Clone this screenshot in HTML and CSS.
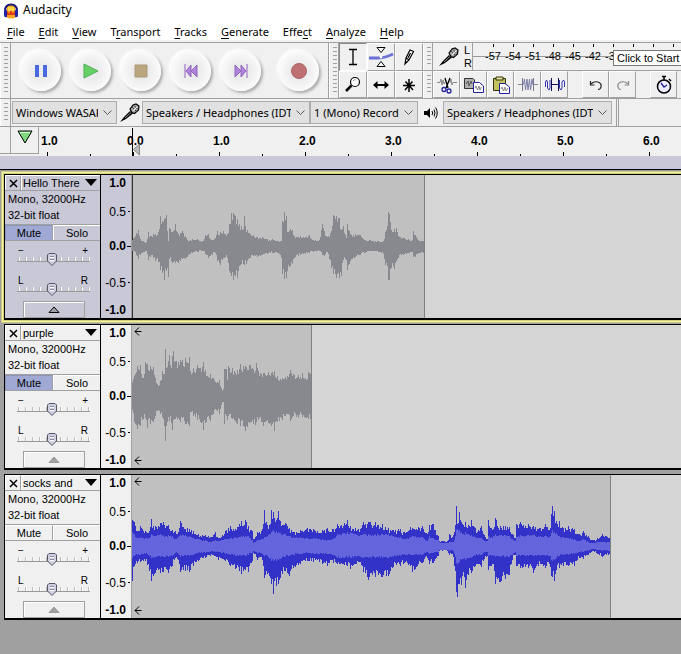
FILE: index.html
```html
<!DOCTYPE html>
<html lang="en">
<head>
<meta charset="UTF-8">
<meta name="viewport" content="width=device-width, initial-scale=1.0">
<title>Audacity</title>
<link rel="stylesheet" href="styles.css">
</head>
<body>
    <!-- Shared icons -->
    <svg class="sprite" width="0" height="0">
        <symbol id="mic" viewBox="0 0 20 20">
            <path d="M0 19 L4 14 L10 8 L13 10.500 L6 16 Z" fill="#000"/>
            <path d="M5 15 L11 9.500" stroke="#999"/>
            <path d="M10 6 L13 2 L16 1 L19 3 L18.500 7 L14.500 10.500 L12 9.500 Z" fill="#aaa" stroke="#000" stroke-width="1.200"/>
            <path d="M12 4 L16.500 8.500 M14 2.500 L18 6.500" stroke="#444"/>
            <path d="M13 8 L17.500 3.500" stroke="#eee"/>
        </symbol>
        <symbol id="arrow-left" viewBox="0 0 8 9">
            <path d="M1 4.500 H7.500 M5 .5 L1 4.500 L5 8.500" fill="none" stroke="#000"/>
        </symbol>
        <symbol id="close" viewBox="0 0 9 9">
            <path d="M1 1 L8 8 M8 1 L1 8" stroke="#000" stroke-width="1.500"/>
        </symbol>
    </svg>

    <header class="title-bar">
        <svg class="logo" width="16" height="16" viewBox="0 0 16 16">
            <path d="M4 3 Q8 0 12 3 L13 14 Q8 17 3 14 Z" fill="#f9a41c"/>
            <path d="M5 4 H11 V8 H5 Z" fill="#ffd84a"/>
            <path d="M3 10 L5 8 L6 11 L8 7 L10 11 L11 8 L13 10 V12 H3 Z" fill="#e0341b"/>
            <path d="M2 8 Q2 1.500 8 1.500 Q14 1.500 14 8" fill="none" stroke="#17177c" stroke-width="2"/>
            <path d="M1 7 Q4 6 4 8 V14 Q1 15 1 12 Z M15 7 Q12 6 12 8 V14 Q15 15 15 12 Z" fill="#2323a8"/>
        </svg>
        <h1>Audacity</h1>
    </header>

    <nav class="menu-bar">
        <a href="#"><u>F</u>ile</a>
        <a href="#"><u>E</u>dit</a>
        <a href="#"><u>V</u>iew</a>
        <a href="#">T<u>r</u>ansport</a>
        <a href="#"><u>T</u>racks</a>
        <a href="#"><u>G</u>enerate</a>
        <a href="#">Effe<u>c</u>t</a>
        <a href="#"><u>A</u>nalyze</a>
        <a href="#"><u>H</u>elp</a>
    </nav>

    <!-- Transport, tools, meter and edit toolbars -->
    <div class="toolbars">
        <div class="grip"></div>
        <div class="transport">
            <button aria-label="Pause"><svg width="16" height="16" viewBox="0 0 16 16"><path d="M2 2 H6 V14 H2 Z M10 2 H14 V14 H10 Z" fill="#4a68e0"/></svg></button>
            <button aria-label="Play"><svg width="16" height="16" viewBox="0 0 16 16"><path d="M1 1 L15 8 L1 15 Z" fill="#66d066" stroke="#4fae52"/></svg></button>
            <button aria-label="Stop"><svg width="16" height="16" viewBox="0 0 16 16"><path d="M2 2 H14 V14 H2 Z" fill="#baa57c" stroke="#a8977a"/></svg></button>
            <button aria-label="Skip to start"><svg width="16" height="16" viewBox="0 0 16 16"><path d="M2 1 V15" stroke="#8f62bd"/><path d="M8 2 V14 L3 8 Z M14 2 V14 L8 8 Z" fill="#b084dc" stroke="#8f62bd"/></svg></button>
            <button aria-label="Skip to end"><svg width="16" height="16" viewBox="0 0 16 16"><path d="M14 1 V15" stroke="#8f62bd"/><path d="M8 2 V14 L13 8 Z M2 2 V14 L8 8 Z" fill="#b084dc" stroke="#8f62bd"/></svg></button>
            <button class="record" aria-label="Record"><svg width="16" height="16" viewBox="0 0 16 16"><circle cx="8" cy="8" r="7.500" fill="#c07070" stroke="#a86464"/></svg></button>
        </div>
        <div class="grip narrow"></div>
        <div class="tools">
            <button class="tool active" aria-label="Selection tool"><svg width="22" height="22" viewBox="0 0 22 22"><path d="M7 3.500 H15 M11 4 V18 M7 18.500 H15" fill="none" stroke="#000" stroke-width="1.300"/></svg></button>
            <button class="tool" aria-label="Envelope tool"><svg width="26" height="22" viewBox="0 0 26 22"><path d="M1 12 H10 Q17 12 25 8" fill="none" stroke="#6c71d8" stroke-width="3"/><path d="M9 1.500 H17 L13 6.500 Z M9 20.500 H17 L13 15.500 Z" fill="#fff" stroke="#000"/><circle cx="13" cy="11" r="1.500" fill="#fff"/></svg></button>
            <button class="tool" aria-label="Draw tool"><svg width="22" height="22" viewBox="0 0 22 22"><path d="M7 18 L8 12 L12 4 L15.500 5.500 L11 14 Z M8 12 L11 14 M12.500 7 L10 12" fill="#fff" stroke="#000" stroke-width="1.200"/><path d="M7 18 L7.500 15 L9.500 16 Z" fill="#000"/></svg></button>
            <button class="tool" aria-label="Zoom tool"><svg width="22" height="22" viewBox="0 0 22 22"><circle cx="13" cy="8" r="4.500" fill="#fff" stroke="#000" stroke-width="1.200"/><path d="M9.500 11.500 L4 17" stroke="#000" stroke-width="2.500"/><path d="M11 7 Q12 5 14 6" stroke="#999" fill="none"/></svg></button>
            <button class="tool" aria-label="Time shift tool"><svg width="22" height="22" viewBox="0 0 22 22"><path d="M5 11 H17" stroke="#000" stroke-width="2"/><path d="M7.500 7 L3 11 L7.500 15 Z M14.500 7 L19 11 L14.500 15 Z" fill="#000"/></svg></button>
            <button class="tool" aria-label="Multi-tool"><svg width="22" height="22" viewBox="0 0 22 22"><path d="M11 5 V18 M5 11.500 H17 M7.500 7.500 L15 16 M14.500 7.500 L7 16" stroke="#000" stroke-width="1.500"/></svg></button>
        </div>
        <div class="right-bars">
            <div class="meter-bar">
                <div class="grip narrow"></div>
                <svg class="meter-mic" width="20" height="20"><use href="#mic"/></svg>
                <div class="channels"><span>L</span><span>R</span></div>
                <div class="meter">
                    <span>-57</span><span>-54</span><span>-51</span><span>-48</span><span>-45</span><span>-42</span><span>-39</span>
                </div>
                <div class="tooltip">Click to Start</div>
            </div>
            <div class="edit-bar">
                <div class="grip narrow"></div>
                <button class="tool" aria-label="Cut"><svg width="22" height="22" viewBox="0 0 22 22"><path d="M1 8.500 H4 L5 5 L6 11 L7 6 L8 10 L9 8 M14 9 L15 5 L16 11 L17 8.500 H21" fill="none" stroke="#888"/><path d="M9 4 L12 14 M14 4 L10 14" stroke="#000" stroke-width="1.300"/><circle cx="8" cy="15.500" r="2" fill="none" stroke="#22229c" stroke-width="1.300"/><circle cx="13" cy="17" r="2" fill="none" stroke="#22229c" stroke-width="1.300"/></svg></button>
                <button class="tool" aria-label="Copy"><svg width="22" height="22" viewBox="0 0 22 22"><path d="M1.500 4.500 H10 L11.500 6 V14.500 H1.500 Z" fill="#b0b0b0" stroke="#333"/><path d="M3 10 L5 7 L6 12 L8 7 L9 10" fill="none" stroke="#555"/><path d="M10.500 8.500 H16.500 L20.500 12 V18.500 H10.500 Z" fill="#fff" stroke="#22229c"/><path d="M12 14 L13 12 L14.500 16 L16 12 L17 16 L18.500 13" fill="none" stroke="#888"/></svg></button>
                <button class="tool" aria-label="Paste"><svg width="22" height="22" viewBox="0 0 22 22"><path d="M3.500 4.500 H15.500 V16.500 H3.500 Z" fill="#c3c05e" stroke="#33330b"/><path d="M6 3 H13 V6 H6 Z" fill="#e5e2a0" stroke="#33330b"/><path d="M9.500 9.500 H15 L19.500 13 V19.500 H9.500 Z" fill="#fff" stroke="#22229c"/><path d="M11 15 L12 13 L13.500 17 L15 13 L16 17 L18 14" fill="none" stroke="#888"/></svg></button>
                <button class="tool" aria-label="Trim"><svg width="22" height="22" viewBox="0 0 22 22"><path d="M1 10.500 H5 M17 10.500 H21" stroke="#888"/><path d="M5.500 4 V17 M16.500 4 V17" stroke="#77778f"/><path d="M6 11 L7.500 5 L8.500 16 L10 5 L11 16 L12.500 5 L13.500 16 L15 5 L16 11" fill="none" stroke="#8080aa"/></svg></button>
                <button class="tool" aria-label="Silence"><svg width="22" height="22" viewBox="0 0 22 22"><path d="M1.500 13 V8 L2.500 6 L3.500 8 V14 L5 16 L6 14 V6 M15.500 6 V14 L17 16 L18 14 V8 L19.500 6 L20.500 8 V13" fill="none" stroke="#3535b0"/><path d="M7.500 4 V17 M14.500 4 V17 M8 10.500 H14" stroke="#111155"/></svg></button>
                <button class="tool spaced" aria-label="Undo"><svg width="22" height="22" viewBox="0 0 22 22"><path d="M6 10 Q9 7 13 8 Q17 9.500 16 13 Q15.500 15.500 13 15.500" fill="none" stroke="#222" stroke-width="1.200"/><path d="M5.500 7 V11 H9.500" fill="none" stroke="#222" stroke-width="1.200"/></svg></button>
                <button class="tool" aria-label="Redo"><svg width="22" height="22" viewBox="0 0 22 22"><path d="M16 10 Q13 7 9 8 Q5 9.500 6 13 Q6.500 15.500 9 15.500" fill="none" stroke="#888" stroke-width="1.200"/><path d="M16.500 7 V11 H12.500" fill="none" stroke="#888" stroke-width="1.200"/></svg></button>
                <button class="tool spaced" aria-label="Timer"><svg width="22" height="22" viewBox="0 0 22 22"><circle cx="11" cy="12.500" r="6.500" fill="#eef" stroke="#000" stroke-width="1.500"/><path d="M9 2.500 H13 M11 2 V6 M16 5 L18 7" stroke="#000" stroke-width="1.500"/><path d="M8 9 L11 13 L14 11" fill="none" stroke="#22229c" stroke-width="1.300"/></svg></button>
            </div>
        </div>
    </div>

    <!-- Device toolbar -->
    <div class="devices">
        <div class="grip"></div>
        <select class="host" aria-label="Audio host"><option>Windows WASAPI</option></select>
        <svg width="20" height="20"><use href="#mic"/></svg>
        <select class="input-device" aria-label="Recording device"><option>Speakers / Headphones (IDT High Definition)</option></select>
        <select class="input-channels" aria-label="Recording channels"><option>1 (Mono) Recording Channel</option></select>
        <svg class="speaker" width="16" height="14" viewBox="0 0 16 14"><path d="M1 5 H4 L7 2 V12 L4 9 H1 Z" fill="#000"/><path d="M9 5 Q10.500 7 9 9 M11 3.500 Q13 7 11 10.500 M12.500 1.500 Q16 7 12.500 12.500" fill="none" stroke="#000"/></svg>
        <select class="output-device" aria-label="Playback device"><option>Speakers / Headphones (IDT High Definition)</option></select>
        <div class="devices-end"></div>
    </div>

    <!-- Timeline -->
    <div class="timeline">
        <div class="corner"></div>
        <button class="pin" aria-label="Pin playhead"><svg width="16" height="14" viewBox="0 0 16 14"><path d="M1 1 H15 L8 13 Z" fill="#7fd97f" stroke="#000"/><path d="M3 2.500 H13" stroke="#dfd"/></svg></button>
        <div class="scale">
            <span>1.0</span><span>0.0</span><span>1.0</span><span>2.0</span><span>3.0</span><span>4.0</span><span>5.0</span><span>6.0</span>
        </div>
        <svg class="cursor" width="8" height="28" viewBox="0 0 8 28"><path d="M.5 0 V28" stroke="#000"/><path d="M7.500 16 V27 L1.500 21.500 Z" fill="#bbb" stroke="#888"/></svg>
    </div>
    <div class="selection-strip"></div>

    <main class="tracks">
        <section class="track focused">
            <div class="panel">
                <div class="track-head">
                    <button class="close" aria-label="Close track"><svg width="9" height="9"><use href="#close"/></svg></button>
                    <button class="name">Hello There</button>
                </div>
                <p class="info">Mono, 32000Hz<br>32-bit float</p>
                <div class="switches"><button class="on">Mute</button><button>Solo</button></div>
                <div class="slider"><div class="ends"><span>−</span><span>+</span></div><input type="range" value="47" aria-label="Gain"></div>
                <div class="slider"><div class="ends"><span>L</span><span>R</span></div><input type="range" value="47" aria-label="Pan"></div>
                <button class="collapse" aria-label="Collapse"></button>
            </div>
            <div class="level"><b>1.0</b><span>0.5</span><b>0.0</b><span>-0.5</span><b>-1.0</b></div>
            <div class="wave"><svg class="clip muted" data-wave="hello"></svg></div>
        </section>

        <section class="track">
            <div class="panel">
                <div class="track-head">
                    <button class="close" aria-label="Close track"><svg width="9" height="9"><use href="#close"/></svg></button>
                    <button class="name">purple</button>
                </div>
                <p class="info">Mono, 32000Hz<br>32-bit float</p>
                <div class="switches"><button class="on">Mute</button><button>Solo</button></div>
                <div class="slider"><div class="ends"><span>−</span><span>+</span></div><input type="range" value="47" aria-label="Gain"></div>
                <div class="slider"><div class="ends"><span>L</span><span>R</span></div><input type="range" value="47" aria-label="Pan"></div>
                <button class="collapse" aria-label="Collapse"></button>
            </div>
            <div class="level"><b>1.0</b><span>0.5</span><b>0.0</b><span>-0.5</span><b>-1.0</b></div>
            <div class="wave">
                <svg class="clip muted" data-wave="purple"></svg>
                <svg class="more top" width="8" height="9"><use href="#arrow-left"/></svg>
                <svg class="more bottom" width="8" height="9"><use href="#arrow-left"/></svg>
            </div>
        </section>

        <section class="track">
            <div class="panel">
                <div class="track-head">
                    <button class="close" aria-label="Close track"><svg width="9" height="9"><use href="#close"/></svg></button>
                    <button class="name">socks and</button>
                </div>
                <p class="info">Mono, 32000Hz<br>32-bit float</p>
                <div class="switches"><button>Mute</button><button>Solo</button></div>
                <div class="slider"><div class="ends"><span>−</span><span>+</span></div><input type="range" value="47" aria-label="Gain"></div>
                <div class="slider"><div class="ends"><span>L</span><span>R</span></div><input type="range" value="47" aria-label="Pan"></div>
                <button class="collapse" aria-label="Collapse"></button>
            </div>
            <div class="level"><b>1.0</b><span>0.5</span><b>0.0</b><span>-0.5</span><b>-1.0</b></div>
            <div class="wave">
                <svg class="clip" data-wave="socks"></svg>
                <svg class="more top" width="8" height="9"><use href="#arrow-left"/></svg>
                <svg class="more bottom" width="8" height="9"><use href="#arrow-left"/></svg>
            </div>
        </section>
    </main>

    <script src="waves.js"></script>
</body>
</html>
```
FILE: styles.css
```css
* {
    margin: 0;
    padding: 0;
    box-sizing: border-box;
}

body {
    min-height: 100vh;
    display: flex;
    flex-direction: column;
    font-family: "Noto Sans", "Open Sans", sans-serif;
    font-size: 11px;
    color: #000;
    background-color: #f0f0f0;
    overflow-x: hidden;
}

button,
select {
    font: inherit;
    color: inherit;
    border: none;
    border-radius: 0;
    background: none;
}

svg {
    display: block;
    flex-shrink: 0;
}

.sprite {
    position: absolute;
}

/* Title and menu */
.title-bar {
    display: flex;
    align-items: center;
    gap: 4px;
    height: 22px;
    padding-left: 3px;
    background-color: #fff;
}

.title-bar h1 {
    font-size: 12px;
    font-weight: normal;
    line-height: 20px;
    padding-bottom: 2px;
}

.menu-bar {
    display: flex;
    gap: 14px;
    height: 18px;
    padding-left: 7px;
    line-height: 20px;
    background-color: #fff;
}

.menu-bar a {
    color: #000;
    text-decoration: none;
}

.menu-bar u {
    text-underline-offset: 2px;
}

/* Toolbars */
.toolbars {
    display: flex;
    height: 57px;
    margin-top: 2px;
    border-top: 1px solid #a0a0a0;
    border-bottom: 1px solid #a0a0a0;
}

.grip {
    flex: 0 0 11px;
    border-left: 1px solid #fff;
    border-right: 1px solid #a0a0a0;
    background: repeating-linear-gradient(#a0a0a0 0 1px, transparent 1px 4px) 3px 4px / 4px calc(100% - 8px) no-repeat;
}

.grip.narrow {
    flex-basis: 10px;
}

.transport {
    display: flex;
    align-items: center;
    flex: 0 0 318px;
    padding-left: 5px;
    border-right: 1px solid #a0a0a0;
}

.transport button {
    display: flex;
    justify-content: center;
    align-items: center;
    width: 40px;
    height: 40px;
    margin: 0 5px;
    border-radius: 50%;
    background: radial-gradient(#ececec 30%, #fafafa 70%);
    box-shadow: -2px -2px 3px #fff, 2px 2px 3px #aaa;
}

.transport .record {
    margin-left: 13px;
}

.tools {
    display: grid;
    grid-template-columns: repeat(3, 28px);
    grid-template-rows: 28px 27px;
}

.tool {
    display: flex;
    justify-content: center;
    align-items: center;
    border-left: 1px solid #fff;
    border-top: 1px solid #fff;
    border-right: 1px solid #a0a0a0;
    border-bottom: 1px solid #a0a0a0;
}

.tool.active {
    border-color: #888 #fff #fff #888;
}

.right-bars {
    display: flex;
    flex-direction: column;
    flex: 1;
    min-width: 0;
}

.meter-bar {
    position: relative;
    display: flex;
    align-items: center;
    height: 28px;
    border-bottom: 1px solid #a0a0a0;
}

.meter-bar .grip,
.edit-bar .grip,
.devices .grip {
    align-self: stretch;
}

.meter-mic {
    margin: 0 5px 0 6px;
}

.channels {
    display: flex;
    flex-direction: column;
    width: 8px;
    font: 11px/13px "Liberation Sans", sans-serif;
}

.meter {
    display: flex;
    flex: 1;
    align-self: stretch;
    min-width: 0;
    padding-left: 10px;
    overflow: hidden;
    border-left: 1px solid #a0a0a0;
    font: 11px/26px "Liberation Sans", sans-serif;
    background:
        linear-gradient(#999, #999) 0 13px / 100% 1px no-repeat,
        repeating-linear-gradient(90deg, #000 0 1px, transparent 1px 20px) 20px 1px / 100% 3px no-repeat;
}

.meter span {
    flex: 0 0 20px;
    text-align: center;
}

.tooltip {
    position: absolute;
    top: 7px;
    right: 0;
    width: 68px;
    padding: 0 3px;
    border: 1px solid #777;
    border-right: none;
    font: 11px/14px "Liberation Sans", sans-serif;
    white-space: nowrap;
    background-color: #fff;
}

.edit-bar {
    display: flex;
    height: 27px;
}

.edit-bar .tool {
    flex: 0 0 27px;
}

.edit-bar .spaced {
    margin-left: 14px;
}

/* Device toolbar */
.devices {
    display: flex;
    align-items: center;
    height: 28px;
    border-bottom: 1px solid #a0a0a0;
}

.devices select {
    appearance: none;
    flex-shrink: 0;
    height: 23px;
    padding: 0 18px 0 3px;
    border: 1px solid #adadad;
    background: #e1e1e1 url("data:image/svg+xml,%3Csvg xmlns='http://www.w3.org/2000/svg' width='9' height='6'%3E%3Cpath d='M.5 .5 L4.5 4.500 L8.500 .5' fill='none' stroke='%23555'/%3E%3C/svg%3E") right 4px center no-repeat;
}

.devices .host {
    width: 105px;
    margin: 0 3px 0 1px;
}

.devices .input-device {
    width: 168px;
    margin-left: 2px;
}

.devices .input-channels {
    width: 108px;
}

.devices .output-device {
    width: 169px;
}

.speaker {
    margin: 0 4px 0 5px;
}

.devices-end {
    align-self: stretch;
    width: 3px;
    margin-left: 4px;
    border-left: 1px solid #a0a0a0;
    border-right: 1px solid #a0a0a0;
}

/* Timeline */
.timeline {
    position: relative;
    display: flex;
    height: 29px;
    overflow: hidden;
}

.corner {
    flex: 0 0 11px;
    height: 27px;
    border-right: 1px solid #a0a0a0;
    border-bottom: 1px solid #a0a0a0;
}

.pin {
    display: flex;
    justify-content: center;
    align-items: center;
    flex: 0 0 28px;
    height: 27px;
    padding-bottom: 6px;
    border-right: 1px solid #a0a0a0;
    border-bottom: 1px solid #a0a0a0;
}

.scale {
    display: flex;
    flex: 1;
    min-width: 0;
}

.scale span {
    flex: 0 0 86px;
    padding-left: 2px;
    font: bold 12px/28px "Liberation Sans", sans-serif;
    background:
        linear-gradient(#000, #000) 8px 25px / 1px 4px no-repeat,
        linear-gradient(#000, #000) 51px 27px / 1px 2px no-repeat;
}

.cursor {
    position: absolute;
    left: 132px;
    top: 1px;
}

.selection-strip {
    height: 14px;
    border-bottom: 1px solid #000;
    background-color: #c8c8d7;
}

/* Tracks */
.tracks {
    display: flex;
    flex-direction: column;
    flex: 1;
    gap: 4px;
    padding: 4px 0 0 4px;
    background-color: #a0a0a0;
    font-family: "Liberation Sans", sans-serif;
}

.track {
    --face: #f0f0f0;
    display: flex;
    height: 146px;
    border: solid #000;
    border-width: 1px 0 2px 1px;
    background-color: var(--face);
}

.track.focused {
    --face: #c8c8d7;
    box-shadow: 0 0 0 1px #d2d27e, 0 0 0 2px #f5f5a0, 0 0 0 3px #c5c583;
}

.panel {
    flex: 0 0 96px;
    border-right: 1px solid #000;
    font-size: 11px;
}

.track-head {
    display: flex;
    height: 16px;
    border-bottom: 1px solid #a0a0a0;
}

.close {
    display: flex;
    justify-content: center;
    align-items: center;
    width: 16px;
    border: solid #fff;
    border-width: 1px 0 0 1px;
    border-right: 1px solid #a0a0a0;
}

.name {
    flex: 1;
    padding: 0 3px 1px 1px;
    border: solid #fff;
    border-width: 1px 0 0 1px;
    text-align: left;
    white-space: nowrap;
    line-height: 12px;
    background: url("data:image/svg+xml,%3Csvg xmlns='http://www.w3.org/2000/svg' width='12' height='7'%3E%3Cpath d='M0 0 H12 L6 7 Z'/%3E%3C/svg%3E") right 3px top 3px no-repeat;
}

.info {
    height: 34px;
    padding: 0 3px;
    border-bottom: 1px solid #a0a0a0;
    line-height: 16px;
}

.switches {
    display: flex;
    height: 16px;
    border-bottom: 1px solid #a0a0a0;
}

.switches button {
    flex: 1;
    padding-bottom: 1px;
    border: solid #fff;
    border-width: 1px 0 0 1px;
    line-height: 12px;
}

.switches button:first-child {
    border-right: 1px solid #a0a0a0;
}

.switches .on {
    border-color: #8c94b8;
    background-color: #9fa9d3;
}

.slider {
    height: 30px;
    padding: 4px 10px 0 12px;
}

.ends {
    display: flex;
    justify-content: space-between;
    height: 7px;
    padding: 0 2px 0 1px;
    font-size: 10px;
    line-height: 11px;
}

.slider input {
    appearance: none;
    display: block;
    width: 100%;
    height: 15px;
    background:
        linear-gradient(#999, #999) 0 9px / 100% 1px no-repeat,
        repeating-linear-gradient(90deg, #bbb 0 1px, #fff 1px 2px, transparent 2px 7px) 1px 5px / 72px 4px no-repeat;
}

.slider input::-webkit-slider-thumb {
    appearance: none;
    width: 12px;
    height: 15px;
    background: url("data:image/svg+xml,%3Csvg xmlns='http://www.w3.org/2000/svg' width='12' height='15'%3E%3Cpath d='M3 1.500 H9 L10.500 3 V9 L6 13.500 L1.500 9 V3 Z' fill='%23cfcfe2' stroke='%23555566'/%3E%3Cpath d='M4 5.500 H8 M4 8.500 H8' stroke='%23fff'/%3E%3Cpath d='M4 4.500 H8 M4 7.500 H8' stroke='%238888a0'/%3E%3C/svg%3E") no-repeat;
}

.collapse {
    display: block;
    width: 62px;
    height: 17px;
    margin-left: 18px;
    border: 1px solid #a0a0a0;
    background: url("data:image/svg+xml,%3Csvg xmlns='http://www.w3.org/2000/svg' width='12' height='7'%3E%3Cpath d='M1 6.500 L6 1 L11 6.500 Z' fill='%23a0a0a0' stroke='%23999'/%3E%3C/svg%3E") center no-repeat;
    box-shadow: inset 1px 1px #fff;
}

.focused .collapse {
    background-image: url("data:image/svg+xml,%3Csvg xmlns='http://www.w3.org/2000/svg' width='12' height='7'%3E%3Cpath d='M1 6.500 L6 1 L11 6.500 Z' fill='%23a0a0a8' stroke='%23000'/%3E%3C/svg%3E");
}

/* Amplitude ruler */
.level {
    display: grid;
    grid-template-rows: 16px 42px 26px 48px 6px;
    align-items: center;
    flex: 0 0 31px;
    padding-right: 5px;
    border-right: 1px solid #a0a0a0;
    font-size: 12px;
    line-height: 14px;
    text-align: right;
    background:
        linear-gradient(#000, #000) 27px 36px / 2px 1px no-repeat,
        linear-gradient(#000, #000) 26px 71px / 4px 1px no-repeat,
        linear-gradient(#000, #000) 27px 107px / 2px 1px no-repeat;
}

.wave {
    position: relative;
    flex: 1;
    min-width: 0;
    overflow: hidden;
    background-color: #d5d5d5;
}

.clip {
    height: 100%;
    border-right: 1px solid #808080;
    box-sizing: content-box;
    background-color: #c0c0c0;
}

.focused .clip {
    box-shadow: inset 1px 0 #333;
}

.clip .peak {
    fill: #3232c8;
}

.clip .rms {
    fill: #6464dc;
}

.clip.muted .peak,
.clip.muted .rms {
    fill: #88888f;
}

.more {
    position: absolute;
    left: 2px;
}

.more.top {
    top: 2px;
}

.more.bottom {
    bottom: 3px;
}
```
FILE: waves.js
```js
// Envelope points: [x, peak up, peak down, rms up, rms down]
const waves = {
    hello: {
        width: 292,
        points: [
            [0,6,5],[4,13,9],[6,16,13],[8,7,9],[14,4,5],[16,14,14],[18,10,11],[21,12,12],[23,12,15],[26,14,16],[28,30,24],[30,25,27],
            [32,27,34],[34,31,25],[35,15,22],[36,5,31],[37,18,13],[40,14,17],[43,22,17],[46,12,17],[50,15,13],[53,10,13],[55,6,11],
            [60,7,7],[65,7,6],[71,5,5],[73,11,8],[76,12,12],[78,7,10],[83,8,7],[85,15,15],[88,14,19],[91,15,12],[95,12,12],[97,22,25],
            [99,33,30],[101,33,34],[103,30,30],[105,27,32],[107,22,20],[109,20,18],[111,17,18],[112,30,19],[114,14,18],[115,16,15],
            [118,12,12],[121,11,10],[125,9,11],[130,9,9],[135,7,8],[140,7,7],[145,5,7],[149,5,12],[150,25,28],[152,34,33],[154,30,32],
            [155,14,25],[158,17,20],[160,16,18],[162,10,12],[168,10,9],[171,9,8],[177,11,7],[181,6,6],[187,6,5],[190,22,9],[192,15,10],
            [195,9,6],[199,15,22],[201,31,28],[204,30,32],[207,28,32],[209,16,30],[211,20,14],[214,8,14],[215,22,24],[218,12,15],
            [223,12,11],[228,11,9],[233,6,7],[238,6,5],[246,5,6],[251,5,8],[253,14,19],[255,20,20],[256,34,34],[257,32,34],[259,16,22],
            [262,17,23],[264,18,15],[266,10,12],[271,8,9],[280,6,6],[281,15,11],[283,11,11],[286,6,7],[292,6,7]
        ]
    },
    purple: {
        width: 179,
        points: [
            [0,14,14],[2,20,26],[5,30,33],[8,31,30],[11,18,23],[13,34,22],[15,32,32],[18,30,28],[21,29,26],[23,18,20],[25,12,15],
            [28,15,18],[30,25,21],[32,22,30],[33,47,45],[34,28,30],[37,41,25],[39,28,27],[40,40,34],[41,45,24],[43,35,23],[48,36,26],
            [53,38,28],[57,39,30],[58,25,16],[61,28,20],[65,31,24],[68,28,26],[71,34,34],[73,26,27],[78,22,25],[81,18,18],[85,14,15],
            [87,16,18],[89,8,9],[90,5,6],[91,7,6],[92,27,28],[94,27,20],[95,16,24],[96,30,20],[100,28,23],[105,26,28],[108,32,30],
            [113,30,35],[118,31,26],[123,25,29],[124,33,26],[126,25,24],[131,23,30],[136,24,27],[142,25,35],[145,20,26],[150,18,24],
            [153,19,20],[158,26,25],[161,22,20],[166,21,22],[170,23,21],[173,18,22],[176,24,23],[179,27,24]
        ]
    },
    socks: {
        width: 478,
        points: [
            [0,26,35,14,12],[2,24,20,12,10],[5,15,17,8,9],[8,20,16,9,9],[13,15,15,8,8],[17,15,25,8,10],[19,27,35,12,12],[21,20,30,10,12],
            [28,23,27,12,11],[31,24,26,11,11],[36,21,27,11,11],[40,16,20,10,10],[43,15,12,7,7],[46,14,14,9,8],[48,25,26,11,11],
            [51,19,24,11,10],[57,17,26,10,10],[61,15,20,8,9],[66,12,15,7,7],[73,11,12,6,7],[78,9,10,4,6],[83,14,10,6,6],[86,8,14,5,6],
            [93,15,15,7,8],[98,20,20,8,9],[103,17,23,9,10],[109,25,28,10,10],[113,26,24,10,10],[116,20,26,10,9],[120,15,15,6,7],
            [121,7,7,3,5],[125,14,14,6,7],[130,17,14,7,8],[132,36,32,9,10],[135,21,28,10,10],[137,21,30,12,13],[139,36,38,14,15],
            [141,34,48,16,15],[144,26,40,15,15],[146,35,38,14,14],[148,25,32,13,13],[153,23,25,12,11],[157,18,30,10,10],[161,14,22,9,9],
            [168,16,18,9,8],[175,18,15,8,7],[181,17,16,8,8],[190,16,18,7,8],[195,18,20,6,8],[201,17,17,7,9],[205,22,18,12,12],
            [215,26,20,14,12],[218,20,23,14,12],[228,17,16,11,11],[231,24,26,12,12],[236,24,34,12,12],[243,24,31,12,12],[250,22,31,12,12],
            [256,18,30,12,12],[261,16,21,10,11],[268,17,20,9,10],[271,14,18,7,9],[278,19,20,9,9],[280,18,26,10,9],[290,20,17,9,9],
            [295,12,12,5,6],[297,21,18,10,8],[301,22,17,8,7],[306,10,10,6,6],[307,5,5,4,4],[315,5,5,3,4],[317,12,9,4,5],[320,9,8,4,4],
            [322,14,20,6,8],[324,40,46,16,17],[325,22,51,17,18],[327,34,38,16,16],[329,24,39,14,14],[331,21,26,12,13],[333,24,42,14,14],
            [336,21,29,12,12],[339,26,27,11,12],[343,18,20,9,10],[346,16,18,8,9],[349,20,21,8,9],[351,12,15,6,7],[355,7,10,5,6],
            [356,26,24,10,10],[359,18,20,9,10],[361,17,18,10,10],[363,28,38,12,11],[368,20,36,11,11],[373,20,33,11,11],[377,19,29,10,11],
            [380,12,14,7,9],[383,8,9,5,6],[384,22,20,9,10],[388,24,22,11,10],[396,22,22,11,10],[401,20,27,11,10],[408,18,18,10,10],
            [413,22,22,10,10],[417,16,18,9,10],[419,32,30,13,14],[420,40,31,16,15],[422,35,35,14,14],[424,25,24,13,12],[427,25,22,10,10],
            [431,18,20,9,9],[436,20,20,8,9],[442,17,20,7,8],[447,12,12,5,6],[451,15,13,7,6],[456,10,9,4,5],[461,6,5,3,3],[465,8,8,4,4],
            [470,12,11,4,5],[478,8,8,4,5]
        ]
    }
};

const middle = 71;

// Small repeatable noise so the outline looks like audio
function makeNoise(seed) {
    return () => {
        seed = (seed * 16807) % 2147483647;
        return seed / 2147483647;
    };
}

function valueAt(points, x, column) {
    let i = 1;
    while (i < points.length - 1 && points[i][0] < x) i++;
    const a = points[i - 1];
    const b = points[i];
    const t = Math.min(1, (x - a[0]) / (b[0] - a[0]));
    return a[column] + (b[column] - a[column]) * t;
}

// One column per pixel
function bars(wave, up, down, spread, noise) {
    let d = '';
    for (let x = 0; x < wave.width; x++) {
        const exact = wave.points.some(point => point[0] === x);
        const top = Math.round(valueAt(wave.points, x, up) * (exact ? 1 : 1 - noise() * spread));
        const bottom = Math.round(valueAt(wave.points, x, down) * (exact ? 1 : 1 - noise() * spread));
        d += `M${x} ${middle - top}h1v${top + bottom}h-1z`;
    }
    return d;
}

document.querySelectorAll('.clip').forEach(clip => {
    const wave = waves[clip.dataset.wave];
    const noise = makeNoise(wave.width);
    clip.setAttribute('width', wave.width);
    let paths = `<path class="peak" d="${bars(wave, 1, 2, 0.25, noise)}"/>`;
    if (wave.points[0].length > 3) {
        paths += `<path class="rms" d="${bars(wave, 3, 4, 0.15, noise)}"/>`;
    }
    clip.innerHTML = paths;
});
```
